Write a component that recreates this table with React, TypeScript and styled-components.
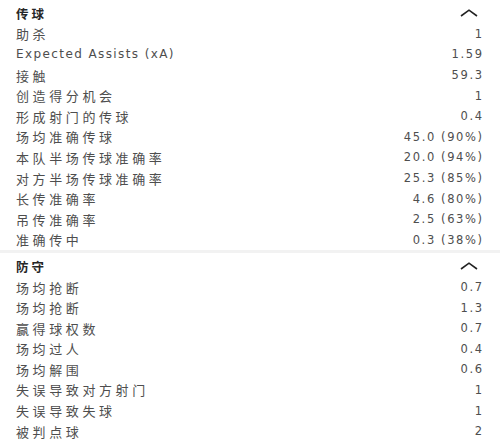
import styled, { createGlobalStyle } from "styled-components";

const GlobalStyle = createGlobalStyle`
	html, body {
		margin: 0;
		padding: 0;
		background: #ffffff;
	}
	body {
		font-family: "DejaVu Sans", "Noto Sans CJK SC", sans-serif;
	}
`;

type Stat = { label: string; value: string; latin?: boolean };

const sections: { title: string; stats: Stat[] }[] = [
	{
		title: "传球",
		stats: [
			{ label: "助杀", value: "1" },
			{ label: "Expected Assists (xA)", value: "1.59", latin: true },
			{ label: "接触", value: "59.3" },
			{ label: "创造得分机会", value: "1" },
			{ label: "形成射门的传球", value: "0.4" },
			{ label: "场均准确传球", value: "45.0 (90%)" },
			{ label: "本队半场传球准确率", value: "20.0 (94%)" },
			{ label: "对方半场传球准确率", value: "25.3 (85%)" },
			{ label: "长传准确率", value: "4.6 (80%)" },
			{ label: "吊传准确率", value: "2.5 (63%)" },
			{ label: "准确传中", value: "0.3 (38%)" },
		],
	},
	{
		title: "防守",
		stats: [
			{ label: "场均抢断", value: "0.7" },
			{ label: "场均抢断", value: "1.3" },
			{ label: "赢得球权数", value: "0.7" },
			{ label: "场均过人", value: "0.4" },
			{ label: "场均解围", value: "0.6" },
			{ label: "失误导致对方射门", value: "1" },
			{ label: "失误导致失球", value: "1" },
			{ label: "被判点球", value: "2" },
		],
	},
];

export default function App() {
	return (
		<>
			<GlobalStyle />
			<Page>
				{sections.map((section) => (
					<Section key={section.title}>
						<HeaderRow>
							<SectionTitle>{section.title}</SectionTitle>
							<Chevron viewBox="0 0 18 8" width="18" height="8">
								<path
									d="M1 7 L9 1.2 L17 7"
									fill="none"
									stroke="#222"
									strokeWidth="1.6"
								/>
							</Chevron>
						</HeaderRow>
						{section.stats.map((stat, i) => (
							<StatRow key={i}>
								<Label $latin={stat.latin}>{stat.label}</Label>
								<Value>{stat.value}</Value>
							</StatRow>
						))}
					</Section>
				))}
			</Page>
		</>
	);
}

const Page = styled.div`
	width: 500px;
	display: flex;
	flex-direction: column;
`;

const Section = styled.section`
	padding-top: 3px;
	border-bottom: 3px solid #f2f2f2;
	display: flex;
	flex-direction: column;
`;

const Row = styled.div`
	height: 20.6px;
	display: flex;
	align-items: center;
	justify-content: space-between;
	padding: 0 18px 0 16px;
`;

const HeaderRow = styled(Row)`
	padding-right: 22px;
`;

const StatRow = styled(Row)``;

const SectionTitle = styled.span`
	font-size: 12.5px;
	font-weight: 700;
	letter-spacing: 3px;
	color: #262626;
`;

const Chevron = styled.svg`
	display: block;
`;

const Label = styled.span<{ $latin?: boolean }>`
	font-size: ${({ $latin }) => ($latin ? "12px" : "13px")};
	letter-spacing: ${({ $latin }) => ($latin ? "1.4px" : "3.6px")};
	color: #4e4e4e;
	white-space: nowrap;
`;

const Value = styled.span`
	font-size: 11.5px;
	letter-spacing: 1.6px;
	margin-right: -1.6px;
	color: #4e4e4e;
	white-space: nowrap;
`;
